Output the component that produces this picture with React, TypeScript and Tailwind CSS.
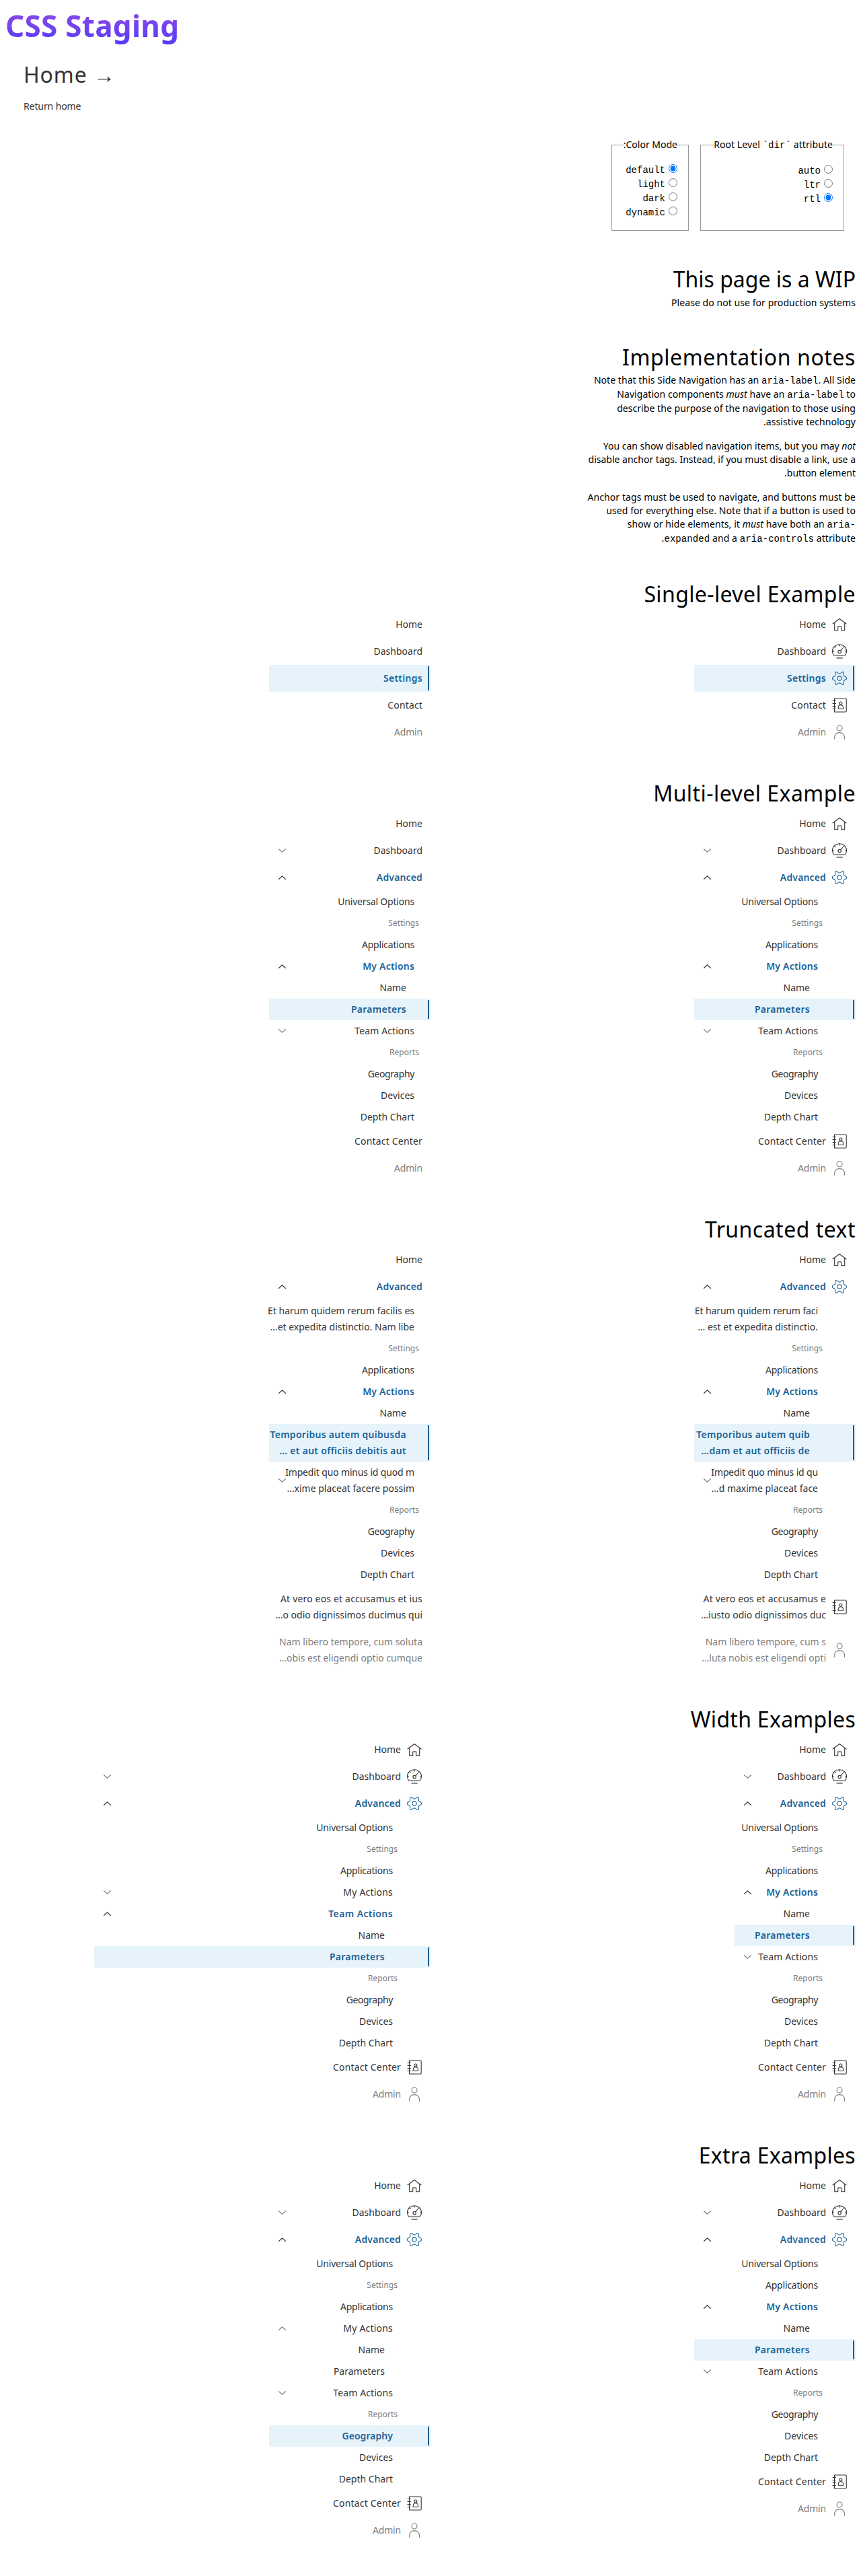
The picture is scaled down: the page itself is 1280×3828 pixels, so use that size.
import React from "react";

type Kind = "top" | "sub" | "deep" | "head";
type IconName = "home" | "gauge" | "gear" | "contact" | "person";
type Item = {
  k: Kind;
  t: string | [string, string];
  icon?: IconName;
  chev?: "up" | "down" | "upLight";
  bold?: boolean;
  current?: boolean;
  muted?: boolean;
};

function Icon({ name }: { name: IconName }) {
  return (
    <svg className="block size-6 shrink-0" viewBox="0 0 24 24" fill="none" stroke="currentColor" strokeWidth="1.1" strokeLinecap="round" strokeLinejoin="round">
      {name === "home" && <path d="M2 11 12 3.500 22 11M4.700 9.300v11.500h5v-5.700h5v5.700h5V9.300" />}
      {name === "gauge" && (
        <>
          <path d="M3.800 18C2.300 16.300 1.500 14.200 1.500 11.900 1.500 6 6.200 1.800 12 1.800S22.500 6 22.500 11.900C22.500 14.200 21.700 16.300 20.200 18ZM8 21.900h8.300" />
          <path d="M12 2v2M5 4.800l1.200 1.200M19 4.800l-1.200 1.200M1.700 12h1.800M20.500 12h1.800M13.600 10.800 16.500 7.600" />
          <circle cx="12.200" cy="12.400" r="2.200" />
        </>
      )}
      {name === "gear" && (
        <>
          <circle cx="12" cy="12" r="3.100" />
          <path d="M8.200 2.900L10.300 4.600Q12 5.700 13.700 4.600L15.800 2.900Q16.700 2.300 17.600 2.800Q18.600 3.300 18.500 4.400L18.200 7Q18.300 8.600 19.700 9.200L21.600 10.100Q22.600 10.700 22.600 12T21.600 13.900L19.700 14.800Q18.300 15.400 18.200 17L18.500 19.600Q18.600 20.700 17.600 21.200Q16.700 21.700 15.800 21.100L13.700 19.400Q12 18.300 10.300 19.400L8.200 21.100Q7.300 21.700 6.400 21.200Q5.400 20.700 5.500 19.600L5.800 17Q5.700 15.400 4.300 14.800L2.400 13.900Q1.400 13.300 1.400 12T2.400 10.100L4.300 9.200Q5.700 8.600 5.800 7L5.500 4.400Q5.400 3.300 6.400 2.800Q7.300 2.300 8.200 2.900Z" />
        </>
      )}
      {name === "contact" && (
        <>
          <path d="M4.500 2h16.500q1.200 0 1.200 1.200v17.600q0 1.200-1.200 1.200H4.500ZM2 5.500h4.400M2 9.500h4.400M2 13.500h4.400M2 17.500h4.400" />
          <circle cx="13.900" cy="9" r="2" />
          <path d="M10.200 17.200v-1.500c0-2.300 1.500-4 3.700-4s3.700 1.700 3.700 4v1.500Z" />
        </>
      )}
      {name === "person" && (
        <>
          <circle cx="12.100" cy="6" r="4" />
          <path d="M4.700 22.300v-2.500c0-4 3-7.200 7.400-7.200s7.400 3.200 7.400 7.200v2.500" />
        </>
      )}
    </svg>
  );
}

const rowKind: Record<Kind, string> = {
  top: "py-2 pr-3 text-sm leading-6",
  sub: "py-1 pr-6 text-sm leading-6",
  deep: "py-1 pr-9 text-sm leading-6",
  head: "py-1 pr-[17px] text-xs leading-6",
};
const rowKindIcon: Record<Kind, string> = {
  top: "py-2 pr-3 text-sm leading-6",
  sub: "py-1 pr-[56px] text-sm leading-6",
  deep: "py-1 pr-[68px] text-sm leading-6",
  head: "py-1 pr-[49px] text-xs leading-6",
};

const tracking: Record<string, string> = {
  Contact: "tracking-[0.15px]",
  Admin: "tracking-[-0.2px]",
  "Universal Options": "tracking-[-0.2px]",
  Applications: "tracking-[-0.2px]",
  "Team Actions": "tracking-[0.1px]",
  Geography: "tracking-[-0.4px]",
  "Contact Center": "tracking-[0.18px]",
  "My Actions": "tracking-[0.2px]",
  "Et harum quidem rerum faci": "tracking-[-0.1px]",
  "Impedit quo minus id qu": "tracking-[-0.15px]",
  "Impedit quo minus id quod m": "tracking-[-0.15px]",
  "At vero eos et accusamus e": "tracking-[0.17px]",
  "At vero eos et accusamus et ius": "tracking-[0.17px]",
};
const boldTracking: Record<string, string> = {
  Advanced: "tracking-[0.15px]",
  "My Actions": "tracking-[0.2px]",
  "Team Actions": "tracking-[0.4px]",
  Geography: "tracking-[0.05px]",
};

function Row({ item, icons }: { item: Item; icons: boolean }) {
  const strong = item.current || item.bold;
  const tone = strong ? "font-semibold text-[#1b6297]" : item.muted || item.k === "head" ? "text-[#7d7d7d]" : "text-[#333]";
  const pad = icons ? rowKindIcon[item.k] : rowKind[item.k];
  const lines = typeof item.t === "string" ? [item.t] : item.t;
  return (
    <li className={`relative flex ${pad} ${tone} ${item.current ? "bg-[#e6f3fb]" : ""}`}>
      {icons && item.k === "top" && (
        <span className="ml-2 flex items-center">
          <Icon name={item.icon ?? "home"} />
        </span>
      )}
      <span dir="ltr" className="text-right whitespace-pre">
        {lines.map((l) => (
          <span key={l} className={`block ${strong ? boldTracking[l] ?? "tracking-[0.28px]" : tracking[l] ?? ""}`}>{l}</span>
        ))}
      </span>
      {item.chev && (
        <svg
          className={`absolute top-1/2 left-[13px] -mt-[7px] h-3.5 w-3.5 ${item.chev === "up" ? "text-[#333]" : "text-[#7d7d7d]"}`}
          viewBox="0 0 14 14"
          fill="none"
          stroke="currentColor"
          strokeWidth="1.2"
        >
          <path d={item.chev === "down" ? "M1.200 4.500 6.500 9.300 11.800 4.500" : "M1.200 9.700 6.500 4.900 11.800 9.700"} />
        </svg>
      )}
      {item.current && <span className="absolute top-0.5 right-0.5 bottom-0.5 w-0.5 bg-[#115d93]" />}
    </li>
  );
}

function Nav({ items, icons = false, width = "w-60" }: { items: Item[]; icons?: boolean; width?: string }) {
  return (
    <nav className="w-1/2">
      <ul className={width}>
        {items.map((it, i) => (
          <Row key={i} item={it} icons={icons} />
        ))}
      </ul>
    </nav>
  );
}

function Section({ title, spacing, children }: { title: string; spacing: string; children: React.ReactNode }) {
  return (
    <section>
      <h2 className="flex h-24 items-end pb-px text-[32px] leading-[48px] text-black">
        <span className={spacing}>{title}</span>
      </h2>
      <div className="flex items-start">{children}</div>
    </section>
  );
}

const home: Item = { k: "top", t: "Home", icon: "home" };
const dash: Item = { k: "top", t: "Dashboard", icon: "gauge", chev: "down" };
const adv: Item = { k: "top", t: "Advanced", icon: "gear", chev: "up", bold: true };
const admin: Item = { k: "top", t: "Admin", icon: "person", muted: true };
const center: Item = { k: "top", t: "Contact Center", icon: "contact" };
const sub = (t: string | [string, string], o: Partial<Item> = {}): Item => ({ k: "sub", t, ...o });
const deep = (t: string | [string, string], o: Partial<Item> = {}): Item => ({ k: "deep", t, ...o });
const head = (t: string): Item => ({ k: "head", t });
const reports: Item[] = [head("Reports"), sub("Geography"), sub("Devices"), sub("Depth Chart")];
const myOpen = sub("My Actions", { bold: true, chev: "up" });
const teamClosed = sub("Team Actions", { chev: "down" });

const single: Item[] = [
  home,
  { k: "top", t: "Dashboard", icon: "gauge" },
  { k: "top", t: "Settings", icon: "gear", current: true },
  { k: "top", t: "Contact", icon: "contact" },
  admin,
];

const multi: Item[] = [
  home, dash, adv, sub("Universal Options"), head("Settings"), sub("Applications"),
  myOpen, deep("Name"), deep("Parameters", { current: true }), teamClosed, ...reports, center, admin,
];

const truncated = (a: [string, string], b: [string, string], c: [string, string], d: [string, string], e: [string, string]): Item[] => [
  home, adv, sub(a), head("Settings"), sub("Applications"), myOpen, deep("Name"),
  deep(b, { current: true }), sub(c, { chev: "down" }), ...reports,
  { k: "top", t: d, icon: "contact" },
  { k: "top", t: e, icon: "person", muted: true },
];

const truncIcons = truncated(
  ["Et harum quidem rerum faci", "… est et expedita distinctio."],
  ["Temporibus autem quib", "…dam et aut officiis de"],
  ["Impedit quo minus id qu", "…d maxime placeat face"],
  ["At vero eos et accusamus e", "…iusto odio dignissimos duc"],
  ["Nam libero tempore, cum s", "…luta nobis est eligendi opti"],
);
const truncPlain = truncated(
  ["Et harum quidem rerum facilis es", "…et expedita distinctio. Nam libe"],
  ["Temporibus autem quibusda", "… et aut officiis debitis aut"],
  ["Impedit quo minus id quod m", "…xime placeat facere possim"],
  ["At vero eos et accusamus et ius", "…o odio dignissimos ducimus qui"],
  ["Nam libero tempore, cum soluta", "…obis est eligendi optio cumque"],
);

const wide: Item[] = [
  home, dash, adv, sub("Universal Options"), head("Settings"), sub("Applications"),
  sub("My Actions", { chev: "down" }), sub("Team Actions", { bold: true, chev: "up" }),
  deep("Name"), deep("Parameters", { current: true }), ...reports, center, admin,
];

const extraRight: Item[] = [
  home, dash, adv, sub("Universal Options"), sub("Applications"), myOpen, deep("Name"),
  deep("Parameters", { current: true }), teamClosed, ...reports, center, admin,
];

const extraLeft: Item[] = [
  home, dash, adv, sub("Universal Options"), head("Settings"), sub("Applications"),
  sub("My Actions", { chev: "upLight" }), deep("Name"), deep("Parameters"), teamClosed,
  head("Reports"), sub("Geography", { current: true }), sub("Devices"), sub("Depth Chart"), center, admin,
];

function Radios({ name, options, value }: { name: string; options: string[]; value: string }) {
  return (
    <div className="pt-4">
      {options.map((o) => (
        <label key={o} className="flex h-[21px] items-start">
          <input type="radio" name={name} defaultChecked={o === value} className="mt-[3px] ml-[5px] h-[13px] w-[13px]" />
          <code className="font-['Liberation_Mono',monospace] text-sm leading-6">{o}</code>
        </label>
      ))}
    </div>
  );
}

const Code = ({ children }: { children: React.ReactNode }) => (
  <code className="font-['Liberation_Mono',monospace] text-sm">{children}</code>
);

export default function App() {
  return (
    <div className="h-[3828px] w-[1280px] bg-white px-2 font-['Noto_Sans',sans-serif] text-sm leading-5 text-black">
      <header className="h-[205px] pt-1.5">
        <h1 className="w-fit bg-linear-to-b from-[#9747dd] to-[#4f39ff] bg-clip-text text-[44px] leading-[64px] font-bold tracking-[0.28px] text-transparent">
          CSS Staging
        </h1>
        <a href="#" className="block pt-[17px] pl-[27px] text-[#333]">
          <span className="block text-[32px] leading-[48px] tracking-[0.9px]">Home →</span>
          <span className="mt-[13px] block tracking-[-0.1px]">Return home</span>
        </a>
      </header>
      <main dir="rtl">
        <div className="h-[607px]">
          <div className="flex h-[138px] gap-[17px] pr-[17px]">
            <fieldset className="w-[214px] border border-[#999] pr-4">
              <legend className="h-[21px] tracking-[0.08px]">Root Level <Code>`dir`</Code> attribute</legend>
              <Radios name="dir" options={["auto", "ltr", "rtl"]} value="rtl" />
            </fieldset>
            <fieldset className="w-[115px] border border-[#999] pr-4">
              <legend>Color Mode:</legend>
              <Radios name="mode" options={["default", "light", "dark", "dynamic"]} value="default" />
            </fieldset>
          </div>
          <h2 className="mt-12 pb-px text-[32px] leading-[48px]">This page is a WIP</h2>
          <p className="tracking-[0.06px]">Please do not use for production systems</p>
          <h2 className="mt-[47px] text-[32px] leading-[48px] tracking-[0.58px]">Implementation notes</h2>
          <div className="flex w-[400px] flex-col gap-4">
            <p className="tracking-[0.05px]">
              Note that this Side Navigation has an <Code>aria-label</Code>. All Side Navigation components <em>must</em> have an{" "}
              <Code>aria-label</Code> to describe the purpose of the navigation to those using assistive technology.
            </p>
            <p>
              You can show disabled navigation items, but you may <em>not</em> disable anchor tags. Instead, if you must disable a link, use a
              button element.
            </p>
            <p className="tracking-[0.08px]">
              Anchor tags must be used to navigate, and buttons must be used for everything else. Note that if a button is used to show or hide
              elements, it <em>must</em> have both an <Code>aria-expanded</Code> and a <Code>aria-controls</Code> attribute.
            </p>
          </div>
        </div>
        <Section title="Single-level Example" spacing="tracking-[0.38px]">
          <Nav items={single} icons />
          <Nav items={single} />
        </Section>
        <Section title="Multi-level Example" spacing="tracking-[0.45px]">
          <Nav items={multi} icons />
          <Nav items={multi} />
        </Section>
        <Section title="Truncated text" spacing="tracking-[0.48px]">
          <Nav items={truncIcons} icons />
          <Nav items={truncPlain} />
        </Section>
        <Section title="Width Examples" spacing="tracking-[0.28px]">
          <Nav items={multi} icons width="w-[180px]" />
          <Nav items={wide} icons width="w-[500px]" />
        </Section>
        <Section title="Extra Examples" spacing="tracking-[0.3px]">
          <Nav items={extraRight} icons />
          <Nav items={extraLeft} icons />
        </Section>
      </main>
    </div>
  );
}
